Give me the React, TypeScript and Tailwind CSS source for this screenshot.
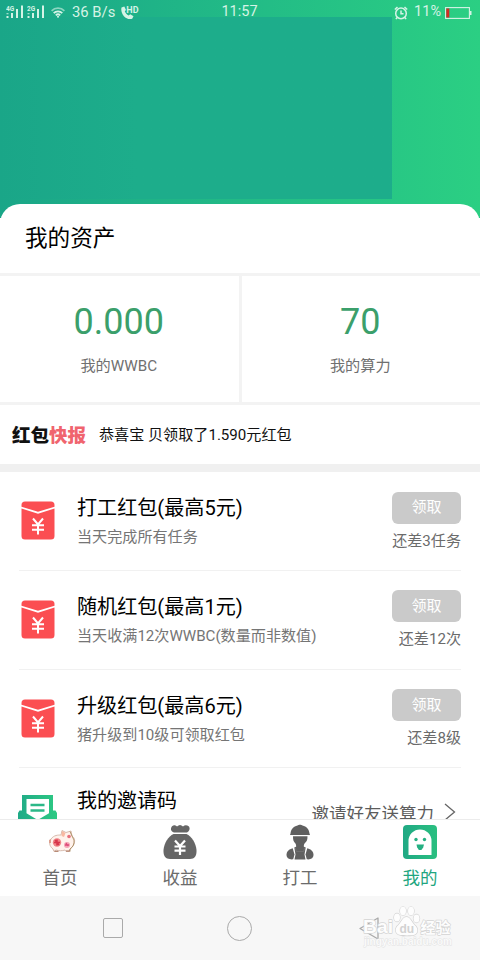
import React from "react";

const Signal = ({ label }: { label: string }) => (
  <svg width="19" height="15" viewBox="0 0 19 15" className="shrink-0" fill="#d5f3e6">
    <text x="0" y="5.5" fontSize="6.5" fontWeight="700" fontFamily="Roboto, sans-serif">{label}</text>
    <rect x="0.5" y="11" width="2" height="2" />
    <rect x="0.5" y="8" width="2" height="1.3" opacity="0.7" />
    <rect x="5" y="8" width="2" height="5" />
    <rect x="10" y="4" width="2" height="9" />
    <rect x="15" y="0.5" width="2" height="12.5" />
  </svg>
);

const StatusBar = () => (
  <div className="relative grid h-[25px] grid-cols-3 items-center pl-[6px] pr-[7px] text-[14.5px] leading-none text-[#d5f3e6]">
    <div className="flex items-center">
      <div className="flex w-[45px] gap-[2px]">
        <Signal label="4G" />
        <Signal label="2G" />
      </div>
      <svg width="14" height="11" viewBox="0 0 14 11" className="shrink-0" fill="none" stroke="#d5f3e6" strokeWidth="1.8">
        <path d="M0.6 3.8a9 9 0 0 1 12.8 0" opacity="0.6" />
        <path d="M2.7 6.200a6 6 0 0 1 8.6 0" />
        <path d="M4.8 8.300a3.2 3.2 0 0 1 4.4 0" />
        <circle cx="7" cy="9.8" r="1" fill="#d5f3e6" stroke="none" />
      </svg>
      <span className="ml-[7px] w-[49px] whitespace-nowrap text-[14.8px]">36 B/s</span>
      <svg width="20" height="14" viewBox="0 0 20 14" className="shrink-0" fill="#d5f3e6">
        <path d="M.5 1.500 3.300.5 5 4 3.800 5.200c.7 1.800 2 3.300 3.900 4.200l1.500-1.200 3.300 2-1.300 2.500C5.500 14.800-1 8 .5 1.500Z" />
        <text x="5.300" y="7.300" fontSize="9" fontWeight="700" fontFamily="Roboto, sans-serif">HD</text>
      </svg>
    </div>
    <span className="text-center">11:57</span>
    <div className="flex items-center justify-end">
      <svg width="14" height="14" viewBox="0 0 14 14" fill="none" stroke="#d5f3e6" strokeWidth="1.5">
        <circle cx="7" cy="7.400" r="5.300" />
        <path d="M7 4.500v3.200h2.500M.8 3.500 3.500 1M13.200 3.500 10.500 1M3.200 11.500l-1.300 1.600M10.800 11.500l1.300 1.600" />
      </svg>
      <span className="ml-[6px] mr-[4px]">11%</span>
      <svg width="28" height="12" viewBox="0 0 28 12">
        <rect x=".6" y=".6" width="23.800" height="10.800" fill="none" stroke="#d5f3e6" strokeWidth="1.100" />
        <rect x="1.300" y="1.500" width="3" height="9" fill="#d42a22" />
        <path d="M25 4h1.500v4H25" fill="#d5f3e6" />
      </svg>
    </div>
  </div>
);

const RedPacket = () => (
  <svg width="34" height="39" viewBox="0 0 34 39" className="ml-[2px] shrink-0">
    <path d="M4 0.500h26a3.500 3.500 0 0 1 3.500 3.500v1.700L17 10.800.5 5.700V4A3.500 3.500 0 0 1 4 .5Z" fill="#fb4e52" />
    <path d="M.5 7.500 17 12.800 33.500 7.500V35a3.500 3.500 0 0 1-3.500 3.500H4A3.500 3.500 0 0 1 .5 35Z" fill="#fb4e52" />
    <path d="m12 17.500 5 6 5-6M17 23.500V33.500M11 24.200h12M11 28.700h12" fill="none" stroke="#fff" strokeWidth="2" />
  </svg>
);

const tasks = [
  { title: "打工红包(最高5元)", note: "当天完成所有任务", left: "还差3任务" },
  { title: "随机红包(最高1元)", note: "当天收满12次WWBC(数量而非数值)", left: "还差12次" },
  { title: "升级红包(最高6元)", note: "猪升级到10级可领取红包", left: "还差8级" },
];

const TaskRow = ({ title, note, left }: (typeof tasks)[number]) => (
  <div className="mx-[19px] flex h-[98.800px] border-b-[1.500px] border-[#f1f1f1]">
    <div className="flex w-[58px] pt-[29px]">
      <RedPacket />
    </div>
    <div className="flex-1 pt-[21px]">
      <div className="h-[30px] whitespace-nowrap text-[20.100px] leading-[30px] text-black">{title}</div>
      <div className="h-[28px] whitespace-nowrap text-[15.100px] leading-[29px] text-[#757575]">{note}</div>
    </div>
    <div className="flex flex-col items-end pt-[19.500px]">
      <button className="h-[32px] w-[69px] rounded-[6px] bg-[#cacaca] text-[15px] leading-[31px] text-white">领取</button>
      <div className="h-[32px] whitespace-nowrap text-[15.100px] leading-[34px] text-[#6b6b6b]">{left}</div>
    </div>
  </div>
);

const Stat = ({ value, label }: { value: string; label: string }) => (
  <div className="flex flex-1 flex-col items-center pr-[1px] pt-[25.500px]">
    <div className="h-[42px] text-[36px] leading-[42px] text-[#3b9f6b]">{value}</div>
    <div className="mt-[9px] text-[15.200px] leading-[28px] text-[#707070]">{label}</div>
  </div>
);

const InviteIcon = () => (
  <svg width="39" height="34" viewBox="0 0 39 34" className="-ml-[1px] shrink-0">
    <defs>
      <linearGradient id="invite" x1="0" x2="1">
        <stop offset="0" stopColor="#20aa87" />
        <stop offset="1" stopColor="#2dc983" />
      </linearGradient>
    </defs>
    <path d="M4 0h31v15.500h2.500L39 18v16H0V18l1.500-2.500H4Z" fill="url(#invite)" />
    <path d="M8.500 4h22.500v14.200L19.700 25 8.500 18.200Z" fill="#fff" />
    <path d="M12.500 10h14M12.500 15.500h14" stroke="#2bb888" strokeWidth="2.600" />
  </svg>
);

const PigIcon = () => (
  <svg width="28" height="26" viewBox="0 0 28 26" className="ml-[3px]">
    <path d="M3 10C6 6 10 6 13 6L14 1.500l4 2 5-1.500 1 5c3 2 3 5 2 8-1 3-3 4-4 5l-1 2.500h-3l-1-1.500c-3 1-6 1-9 0l-2 1.500H6l-1-2.500C1 17 1 13 3 10Z" fill="#fff2ec" stroke="#d3b3a6" strokeWidth=".9" />
    <path d="m1 11 2-1v4H1Z" fill="#dda08f" />
    <path d="M22 2.500 24 7l2 4c.5 4-1 7-4 9v2.500" fill="none" stroke="#a98b60" strokeWidth=".9" />
    <circle cx="9" cy="13.500" r="4.200" fill="#ef8386" />
    <path d="M6 13.500h6M9 10.500v6M7 11l4 5" stroke="#d8354a" strokeWidth="1.500" />
    <circle cx="19" cy="16" r="3" fill="#f5a3b5" />
    <path d="m18 14 2 3m-3-1h4" stroke="#dd4a78" strokeWidth="1.300" />
    <circle cx="21" cy="7.500" r="1.800" fill="#e8707c" />
    <path d="m14 2 3.500 2-1.500 4-2.500-1Z" fill="#f9b9a2" />
    <path d="M6.500 22.300h4M18 22h4" stroke="#a76f56" strokeWidth="1" />
  </svg>
);

const BagIcon = () => (
  <svg width="34" height="36" viewBox="0 0 34 36" fill="#666">
    <path d="M9 2.200C11 .5 13 1.500 14 2.500c2-2 4-2 6 0 2-2 4-1.500 6 0 1.500 2.500 0 5-2 6H11C8 7.500 7 5 9 2.200Z" />
    <path d="M10.500 10h13c5 2.500 9.500 9 10 16 .3 6-2 9-6.500 9H7c-4.500 0-6.800-3-6.500-9C1 19 5.500 12.500 10.500 10Z" />
    <path d="m12 16.500 5 5.500 5-5.500M17 22v9M11.500 22.500h11M11.500 26.700h11" fill="none" stroke="#fff" strokeWidth="2.200" />
  </svg>
);

const WorkerIcon = () => (
  <svg width="28" height="36" viewBox="0 0 28 36" fill="#606060">
    <path d="M4.500 9.500C5 5 7.500 2.500 11.500 1.500 12.500.5 15.500.5 16.500 1.500c4 1 6.500 3.500 7 8l.5 1.500H4Z" />
    <path d="M7 12.300h14.500c0 3.700-.7 5.200-2.500 6.700-1 1-1.200 2-1.200 4h-7.600c0-2-.2-3-1.200-4C7.500 17.500 7 16 7 12.300Z" />
    <path d="M6.700 24.200 8.500 30.500 7.200 35.300C3 35.800.5 34 .5 31c0-3.500 2.500-6 6.200-6.800Z" />
    <path d="M21.300 24.200 19.500 30.500l1.300 4.800c4.200.5 6.700-1.300 6.700-4.300 0-3.500-2.500-6-6.200-6.800Z" />
    <path d="M8.300 23.500 10.500 22.500h7l2.200 1-1.200 7 1 5H8.500l1-5Z" />
    <path d="M9.300 23.500 10.300 27.500h7.400l1-4" fill="none" stroke="#777" strokeWidth=".7" />
  </svg>
);

const GhostIcon = () => (
  <svg width="34" height="34" viewBox="0 0 34 34">
    <defs>
      <linearGradient id="ghost" x1="0" x2="1">
        <stop offset="0" stopColor="#20a984" />
        <stop offset="1" stopColor="#2abf80" />
      </linearGradient>
    </defs>
    <rect width="34" height="34" rx="4" fill="url(#ghost)" />
    <path d="M5.500 30V16a11.500 11.500 0 0 1 23 0v14Z" fill="#fff" />
    <circle cx="13" cy="14.500" r="1.700" fill="#25b082" />
    <circle cx="21.500" cy="14.500" r="1.700" fill="#25b082" />
    <path d="M13.500 19.500h7.500l-.8 3-1.800 2.500h-2.500l-1.700-2.500Z" fill="#25b082" />
  </svg>
);

const tabs = [
  { label: "首页", icon: <PigIcon />, active: false },
  { label: "收益", icon: <BagIcon />, active: false },
  { label: "打工", icon: <WorkerIcon />, active: false },
  { label: "我的", icon: <GhostIcon />, active: true },
];

const Watermark = () => (
  <svg width="100" height="50" viewBox="0 0 100 50" className="absolute left-[360px] top-[4px]">
    <g fill="#fdfdfd" stroke="#d4d4d4" strokeWidth="1.300" paintOrder="stroke" strokeLinejoin="round">
      <text x="3" y="33" fontSize="19" fontWeight="700" textLength="30" lengthAdjust="spacingAndGlyphs" fontFamily="Liberation Sans, sans-serif">Bai</text>
      <ellipse cx="37" cy="17.500" rx="3" ry="4" />
      <ellipse cx="43" cy="11" rx="3" ry="4.200" />
      <ellipse cx="51" cy="11" rx="3" ry="4.200" />
      <ellipse cx="56.500" cy="18.500" rx="3" ry="4" />
      <path d="M46.500 17c4 0 5 5 8 8 4 3 4 9-1 10-3 .5-10 .5-13 0-6-1-6-7-2-10 3-3 4-8 8-8Z" />
      <text x="60.500" y="33" fontSize="15" fontWeight="700" fontFamily="Noto Sans CJK SC, sans-serif">经验</text>
    </g>
    <text x="39.500" y="32.500" fontSize="12" fontWeight="700" fill="#d2d2d2" fontFamily="Liberation Sans, sans-serif">du</text>
    <text x="4" y="44.500" fontSize="10" fontWeight="700" textLength="88" lengthAdjust="spacingAndGlyphs" fill="#fafafa" stroke="#e2e2e2" strokeWidth=".9" paintOrder="stroke" fontFamily="Liberation Sans, sans-serif">jingyan.baidu.com</text>
  </svg>
);

export default function App() {
  return (
    <div className="flex h-[960px] w-[480px] flex-col overflow-hidden bg-white font-[Roboto,'Noto_Sans_CJK_SC',sans-serif]">
      <main className="h-[819px] shrink-0 overflow-hidden">
        <header className="relative h-[218px] bg-linear-to-r from-[#1aa688] to-[#2bcf83]">
          <div className="absolute left-0 top-[17px] h-[182px] w-[392px] bg-linear-to-r from-[#1aa688] to-[#1dad8b] to-35%" />
          <StatusBar />
        </header>
        <section className="relative mt-[-14px] rounded-t-[20px] bg-white">
          <h1 className="h-[71.500px] border-b-[3px] border-[#f3f3f3] pl-[25px] text-[22.600px] leading-[70px] text-black">我的资产</h1>
          <div className="flex h-[129.500px] border-b-[3px] border-[#f3f3f3]">
            <Stat value="0.000" label="我的WWBC" />
            <div className="w-[3px] bg-[#f3f3f3]" />
            <Stat value="70" label="我的算力" />
          </div>
          <div className="flex h-[67px] items-center border-b-[8px] border-[#f0f0f0] pl-[12px] pt-[2px]">
            <div className="w-[87px] whitespace-nowrap text-[18.500px] font-black leading-[56px] text-[#111]">
              红包<span className="text-[#f0646e]">快报</span>
            </div>
            <span className="whitespace-nowrap text-[15.100px] text-[#111]">恭喜宝 贝领取了1.590元红包</span>
          </div>
          {tasks.map((t) => (
            <TaskRow key={t.title} {...t} />
          ))}
          <div className="mx-[19px] flex h-[98px] pt-[15px]">
            <div className="flex w-[58px] pt-[11.500px]">
              <InviteIcon />
            </div>
            <div className="flex-1 pt-[2px] text-[20px] leading-[32px] text-black">我的邀请码</div>
            <div className="flex items-start pt-[13px] text-[17.500px] leading-[36px] text-[#5c5c5c]">
              邀请好友送算力
              <svg width="12" height="18" viewBox="0 0 12 18" className="ml-[10px] mr-[5px] mt-[7px]" fill="none" stroke="#666" strokeWidth="1.300">
                <path d="m1 1 9.500 8L1 17" />
              </svg>
            </div>
          </div>
        </section>
      </main>
      <nav className="grid h-[77px] shrink-0 grid-cols-4 border-t border-[#ececec] bg-white">
        {tabs.map((t) => (
          <div key={t.label} className="flex flex-col items-center pt-[4px]">
            <div className="flex h-[36px] items-center">{t.icon}</div>
            <span className={t.active ? "text-[17.500px] leading-[36px] text-[#1fa680]" : "text-[17.500px] leading-[36px] text-[#6b6b6b]"}>{t.label}</span>
          </div>
        ))}
      </nav>
      <footer className="relative h-[64px] shrink-0 bg-[#f7f7f7]">
        <div className="flex h-full items-center justify-between pl-[103px] pr-[101px]">
          <div className="h-[20px] w-[20px] rounded-[2px] border border-[#aaa]" />
          <div className="-ml-[3px] h-[25px] w-[25px] rounded-full border-[1.500px] border-[#aaa]" />
          <svg width="20" height="23" viewBox="0 0 20 23" fill="none" stroke="#aaa" strokeWidth="1.300" strokeLinejoin="round">
            <path d="M19 1v21L1 11.500Z" />
          </svg>
        </div>
        <Watermark />
      </footer>
    </div>
  );
}
